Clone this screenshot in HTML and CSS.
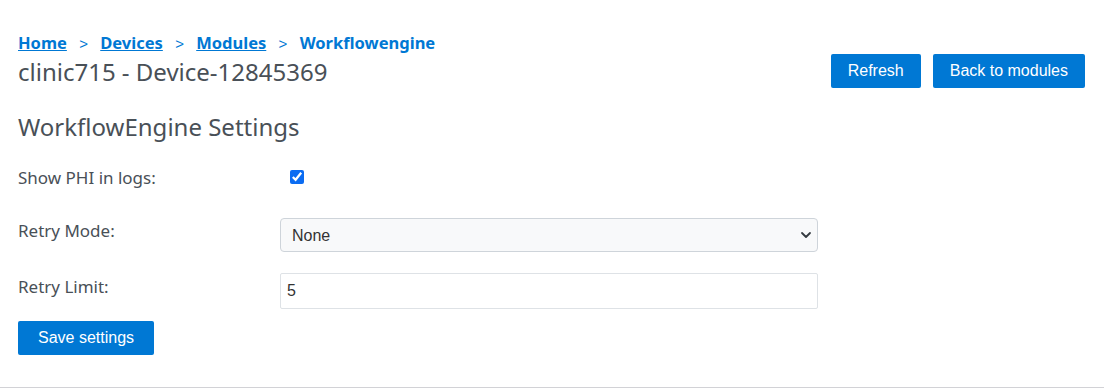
FILE: index.html
```html
<!DOCTYPE html>
<html lang="en">
<head>
	<meta charset="UTF-8">
	<title>WorkflowEngine Settings</title>
	<link rel="stylesheet" href="styles.css">
</head>
<body>
	<div class="page">
		<div class="top">
			<div class="titles">
				<div class="crumbs">
					<a href="#">Home</a>
					<span class="sep">&gt;</span>
					<a href="#">Devices</a>
					<span class="sep">&gt;</span>
					<a href="#">Modules</a>
					<span class="sep">&gt;</span>
					<span class="current">Workflowengine</span>
				</div>
				<h1>clinic715 - Device-12845369</h1>
			</div>
			<div class="actions">
				<button class="btn">Refresh</button>
				<button class="btn">Back to modules</button>
			</div>
		</div>

		<h2>WorkflowEngine Settings</h2>

		<form class="settings">
			<div class="row row-check">
				<label for="phi">Show PHI in logs:</label>
				<div class="field"><input type="checkbox" id="phi" checked></div>
			</div>
			<div class="row">
				<label for="mode">Retry Mode:</label>
				<div class="field">
					<select id="mode">
						<option>None</option>
						<option>Linear</option>
						<option>Exponential</option>
					</select>
				</div>
			</div>
			<div class="row row-last">
				<label for="limit">Retry Limit:</label>
				<div class="field"><input type="text" id="limit" value="5"></div>
			</div>
			<button type="button" class="btn btn-save">Save settings</button>
		</form>
	</div>
</body>
</html>
```

FILE: styles.css
```css
*{
	margin: 0;
	padding: 0;
	box-sizing: border-box;
}
body{
	font-family: "Noto Sans", "Open Sans", sans-serif;
	color: #495057;
	background: #fff;
}
.page{
	padding: 31px 19px 32px 18px;
	border-bottom: 1px solid #d2d2d6;
}
.top{
	display: flex;
	justify-content: space-between;
	align-items: flex-end;
}
.crumbs{
	font-size: 16.5px;
	font-weight: bold;
	line-height: 24px;
	color: #0078d4;
}
.crumbs a{
	color: #0078d4;
}
.crumbs .sep{
	font-family: "Liberation Sans", sans-serif;
	font-weight: normal;
	font-size: 15px;
	margin: 0 8px;
	color: #0078d4;
}
h1{
	font-size: 24px;
	font-weight: normal;
	line-height: 32px;
}
.actions{
	display: flex;
	gap: 12px;
}
.btn{
	font-family: "Liberation Sans", Arial, sans-serif;
	font-size: 16px;
	color: #fff;
	background: #0078d4;
	border: none;
	border-radius: 2px;
	height: 34px;
	padding: 0 17px;
	cursor: pointer;
}
.btn-save{
	padding: 0 20px;
}
h2{
	font-size: 24px;
	font-weight: normal;
	line-height: 32px;
	margin-top: 23px;
	margin-bottom: 23px;
}
.row{
	display: grid;
	grid-template-columns: 262px 538px;
	margin-bottom: 21px;
}
.row label{
	font-size: 17px;
	line-height: 24px;
	padding-top: 1px;
}
.row-check{
	margin-bottom: 28px;
}
.row-check label{
	padding-top: 0;
}
.row-check .field{
	padding: 4px 0 0 10px;
}
.row-check input{
	width: 14px;
	height: 14px;
	margin: 0;
	accent-color: #0b6cf2;
	display: block;
}
.row-last{
	margin-bottom: 12px;
}
.row-last label{
	padding-top: 2px;
}
select, input[type="text"]{
	width: 100%;
	font-family: "Liberation Sans", Arial, sans-serif;
	font-size: 16px;
	color: #333;
	padding: 0 11px;
	outline: none;
}
select{
	height: 34px;
	appearance: none;
	background: #f8f9fa url("data:image/svg+xml,%3Csvg xmlns='http://www.w3.org/2000/svg' width='12' height='8' viewBox='0 0 12 8'%3E%3Cpath d='M2 2l4 4 4-4' fill='none' stroke='%23343a40' stroke-width='1.8' stroke-linecap='round' stroke-linejoin='round'/%3E%3C/svg%3E") no-repeat right 5px center;
	border: 1px solid #ced4da;
	border-radius: 4px;
}
input[type="text"]{
	height: 36px;
	background: #fff;
	border: 1px solid #dee2e6;
	border-radius: 2px;
	padding: 0 6px;
}
```
